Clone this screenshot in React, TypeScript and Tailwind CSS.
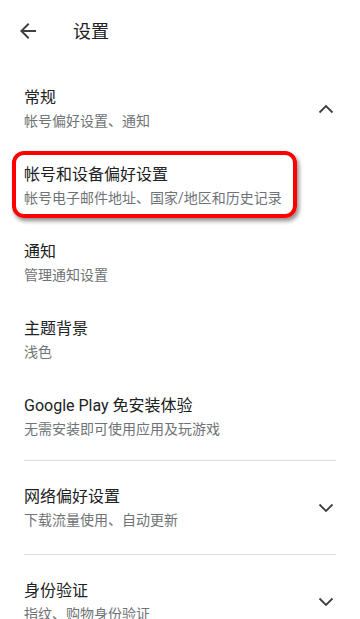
import type { ReactNode } from "react";

const FONT = { fontFamily: 'Roboto, "Noto Sans CJK SC", sans-serif' };

function Chevron({ up = false }: { up?: boolean }) {
  return (
    <svg width="16" height="10" viewBox="0 0 16 10" className="shrink-0">
      <polyline
        points={up ? "1.5,8.5 8,2 14.5,8.5" : "1.5,1.5 8,8 14.5,1.5"}
        fill="none"
        stroke="#3c4043"
        strokeWidth="1.8"
      />
    </svg>
  );
}

function Row({
  title,
  sub,
  chevron,
  className = "py-4",
  children,
}: {
  title: string;
  sub: string;
  chevron?: "up" | "down";
  className?: string;
  children?: ReactNode;
}) {
  return (
    <div className={`relative flex items-center pl-6 pr-[26px] ${className}`}>
      <div className="min-w-0 flex-1">
        <p className="text-base leading-6 text-[#202124]">{title}</p>
        <p className="mt-px text-sm leading-5 text-[#6f7377]">{sub}</p>
      </div>
      {chevron && <Chevron up={chevron === "up"} />}
      {children}
    </div>
  );
}

export default function App() {
  return (
    <div className="h-[619px] w-[360px] overflow-hidden bg-white" style={FONT}>
      <header className="flex h-[62px] items-center">
        <svg width="24" height="24" viewBox="0 0 24 24" className="ml-4">
          <path
            d="M20 11H7.83l5.59-5.59L12 4l-8 8 8 8 1.41-1.41L7.83 13H20v-2z"
            fill="#3c4043"
          />
        </svg>
        <h1 className="ml-[33px] text-[18px] text-[#202124]">设置</h1>
      </header>

      <div className="mt-2">
        <Row title="常规" sub="帐号偏好设置、通知" chevron="up" />
        <Row title="帐号和设备偏好设置" sub="帐号电子邮件地址、国家/地区和历史记录">
          <div className="pointer-events-none absolute left-[12px] top-[4px] h-[67px] w-[285px] rounded-[12px] border-4 border-[#f00] shadow-[2px_3px_4px_rgba(0,0,0,0.45)]" />
        </Row>
        <Row title="通知" sub="管理通知设置" />
        <Row title="主题背景" sub="浅色" />
        <Row title="Google Play 免安装体验" sub="无需安装即可使用应用及玩游戏" />

        <div className="mx-6 mt-[5px] h-px bg-[#dadce0]" />
        <Row title="网络偏好设置" sub="下载流量使用、自动更新" chevron="down" className="py-6" />
        <div className="mx-6 h-px bg-[#dadce0]" />
        <Row title="身份验证" sub="指纹、购物身份验证" chevron="down" className="py-6" />
      </div>
    </div>
  );
}
